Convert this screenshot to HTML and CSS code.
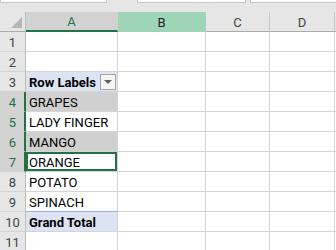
FILE: index.html
```html
<!DOCTYPE html>
<html>
<head>
<meta charset="utf-8">
<link rel="stylesheet" href="styles.css">
</head>
<body>
<div class="topbar">
  <div class="box box-name"></div>
  <div class="box box-fx"></div>
  <div class="box box-fx2"></div>
</div>
<div class="sheet">
  <div class="corner"><svg width="26" height="20" viewBox="0 0 26 20"><polygon points="22,5 22,16 11,16" fill="#b7b7b7"/></svg></div>
  <div class="ch ch-sel">A</div>
  <div class="ch ch-hi">B</div>
  <div class="ch">C</div>
  <div class="ch">D</div>
  <div class="ch ch-last"></div>

  <div class="rh">1</div><div class="c"></div><div class="c"></div><div class="c"></div><div class="c"></div><div class="c c-last"></div>
  <div class="rh">2</div><div class="c"></div><div class="c"></div><div class="c"></div><div class="c"></div><div class="c c-last"></div>
  <div class="rh">3</div><div class="c c-pv c-head"><span class="bold">Row Labels</span><span class="dd"><svg width="8" height="4" viewBox="0 0 8 4"><polygon points="0,0 8,0 4,4" fill="#5f5f5f"/></svg></span></div><div class="c"></div><div class="c"></div><div class="c"></div><div class="c c-last"></div>
  <div class="rh rh-sel">4</div><div class="c c-gray">GRAPES</div><div class="c"></div><div class="c"></div><div class="c"></div><div class="c c-last"></div>
  <div class="rh rh-sel">5</div><div class="c">LADY FINGER</div><div class="c"></div><div class="c"></div><div class="c"></div><div class="c c-last"></div>
  <div class="rh rh-sel">6</div><div class="c c-gray">MANGO</div><div class="c"></div><div class="c"></div><div class="c"></div><div class="c c-last"></div>
  <div class="rh rh-sel">7</div><div class="c c-active">ORANGE</div><div class="c"></div><div class="c"></div><div class="c"></div><div class="c c-last"></div>
  <div class="rh">8</div><div class="c">POTATO</div><div class="c"></div><div class="c"></div><div class="c"></div><div class="c c-last"></div>
  <div class="rh">9</div><div class="c">SPINACH</div><div class="c"></div><div class="c"></div><div class="c"></div><div class="c c-last"></div>
  <div class="rh">10</div><div class="c c-pv c-total"><span class="bold">Grand Total</span></div><div class="c"></div><div class="c"></div><div class="c"></div><div class="c c-last"></div>
  <div class="rh">11</div><div class="c"></div><div class="c"></div><div class="c"></div><div class="c"></div><div class="c c-last"></div>
</div>
</body>
</html>
```

FILE: styles.css
```css
* { box-sizing: border-box; }
html, body { margin: 0; padding: 0; }
body {
  width: 336px;
  height: 250px;
  overflow: hidden;
  background: #ffffff;
  font-family: Roboto, "Liberation Sans", sans-serif;
  font-size: 13px;
  color: #000;
}
.topbar {
  height: 12px;
  background: #e6e6e6;
  display: flex;
  align-items: flex-start;
}
.box {
  height: 3px;
  background: #fff;
  border: 1px solid #c6c6c6;
  border-top: none;
}
.box-name { width: 107px; }
.box-fx { width: 109px; margin-left: 30px; }
.box-fx2 { flex: 1; margin-left: 4px; border-right: none; }

.sheet {
  display: grid;
  grid-template-columns: 26px 92px 88px 64px 65px 1fr;
  grid-auto-rows: 20px;
}
.corner {
  background: #e6e6e6;
  border-right: 1px solid #bdbdbd;
  border-bottom: 1px solid #ababab;
}
.corner svg { display: block; }
.ch {
  background: #e6e6e6;
  border-right: 1px solid #c8c8c8;
  border-bottom: 1px solid #ababab;
  display: flex;
  align-items: center;
  justify-content: center;
  color: #444;
  padding-top: 1px;
}
.ch-sel {
  background: #d2d2d2;
  border-bottom: 2px solid #217346;
  border-right-color: #d2d2d2;
  color: #217346;
}
.ch-hi {
  background: #9fd5b7;
  border-right-color: #9fd5b7;
  border-bottom-color: #9fd5b7;
  color: #222;
}
.ch-last { border-right: none; }

.rh {
  background: #e6e6e6;
  border-right: 1px solid #bdbdbd;
  border-bottom: 1px solid #d2d2d2;
  color: #444;
  text-align: center;
  line-height: 17px;
  padding-top: 2px;
}
.rh-sel {
  background: #d2d2d2;
  border-right: 2px solid #217346;
  color: #217346;
  padding-left: 1px;
}
.c {
  border-right: 1px solid #d4d4d4;
  border-bottom: 1px solid #d4d4d4;
  line-height: 17px;
  padding: 2px 0 0 3px;
  white-space: nowrap;
  overflow: hidden;
}
.c-last { border-right: none; }
.bold { font-weight: 700; }
.c-pv { background: #dce4f4; }
.c-head {
  display: flex;
  align-items: center;
  justify-content: space-between;
  padding: 0 1px 0 3px;
}
.c-head .bold { padding-top: 2px; }
.dd {
  width: 16px;
  height: 16px;
  border: 1px solid #a6a6a6;
  background: #f4f4f4;
  display: flex;
  align-items: center;
  justify-content: center;
}
.dd svg { display: block; }
.c-total { border-top: 1px solid #9bb3dd; margin-top: -1px; padding-top: 2px; }
.c-gray { background: #d0d0d0; }
.c-active { box-shadow: inset 0 0 0 2px #217346; }
```
